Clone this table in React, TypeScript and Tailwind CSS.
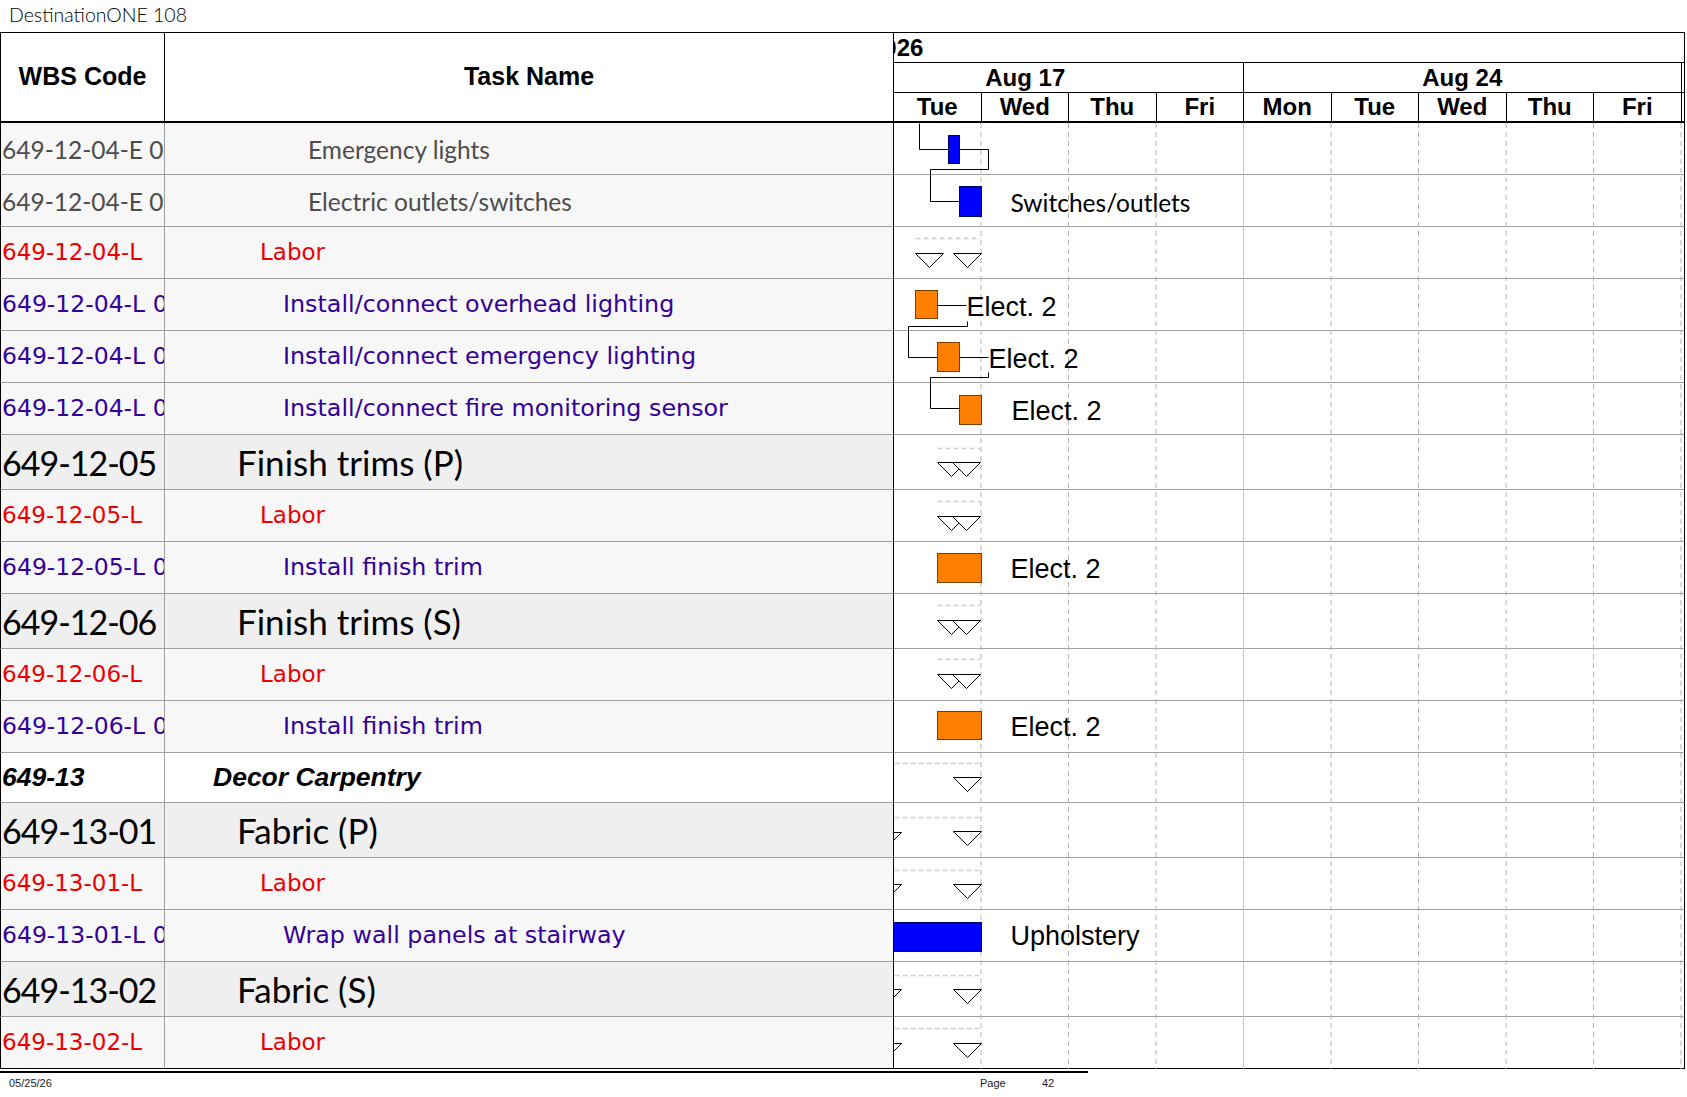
import React from "react";

type Kind = "gray" | "red" | "purple" | "big" | "decor";

type Row = { wbs: string; task: string; kind: Kind };

const rows: Row[] = [
  { wbs: "649-12-04-E 010", task: "Emergency lights", kind: "gray" },
  { wbs: "649-12-04-E 020", task: "Electric outlets/switches", kind: "gray" },
  { wbs: "649-12-04-L", task: "Labor", kind: "red" },
  { wbs: "649-12-04-L 010", task: "Install/connect overhead lighting", kind: "purple" },
  { wbs: "649-12-04-L 020", task: "Install/connect emergency lighting", kind: "purple" },
  { wbs: "649-12-04-L 030", task: "Install/connect fire monitoring sensor", kind: "purple" },
  { wbs: "649-12-05", task: "Finish trims (P)", kind: "big" },
  { wbs: "649-12-05-L", task: "Labor", kind: "red" },
  { wbs: "649-12-05-L 010", task: "Install finish trim", kind: "purple" },
  { wbs: "649-12-06", task: "Finish trims (S)", kind: "big" },
  { wbs: "649-12-06-L", task: "Labor", kind: "red" },
  { wbs: "649-12-06-L 010", task: "Install finish trim", kind: "purple" },
  { wbs: "649-13", task: "Decor Carpentry", kind: "decor" },
  { wbs: "649-13-01", task: "Fabric (P)", kind: "big" },
  { wbs: "649-13-01-L", task: "Labor", kind: "red" },
  { wbs: "649-13-01-L 010", task: "Wrap wall panels at stairway", kind: "purple" },
  { wbs: "649-13-02", task: "Fabric (S)", kind: "big" },
  { wbs: "649-13-02-L", task: "Labor", kind: "red" },
];

const rowHeight: Record<Kind, string> = {
  gray: "h-[52px]",
  red: "h-[52px]",
  purple: "h-[52px]",
  big: "h-[55px]",
  decor: "h-[50px]",
};

const rowBg: Record<Kind, string> = {
  gray: "bg-[#f7f7f7]",
  red: "bg-[#f7f7f7]",
  purple: "bg-[#f7f7f7]",
  big: "bg-[#efefef]",
  decor: "bg-white",
};

const wbsText: Record<Kind, string> = {
  gray: "font-['Lato',sans-serif] text-[24.5px] text-[#4d4d4d] pt-[3px]",
  red: "font-['DejaVu_Sans',sans-serif] text-[23px] text-[#ee0000]",
  purple: "font-['DejaVu_Sans',sans-serif] text-[23.5px] text-[#330099]",
  big: "font-['Lato',sans-serif] text-[34px] tracking-[-1px] text-black",
  decor: "font-['Liberation_Sans',sans-serif] text-[26.5px] font-bold italic text-black",
};

const taskText: Record<Kind, string> = {
  gray: "font-['Lato',sans-serif] text-[24.5px] text-[#4d4d4d] pl-[143px] pt-[3px]",
  red: "font-['DejaVu_Sans',sans-serif] text-[23px] text-[#ee0000] pl-[95px]",
  purple: "font-['DejaVu_Sans',sans-serif] text-[23.8px] text-[#330099] pl-[118px]",
  big: "font-['Lato',sans-serif] text-[35px] text-black pl-[72px]",
  decor: "font-['Liberation_Sans',sans-serif] text-[26.5px] font-bold italic text-black pl-[48px]",
};

const days = ["Tue", "Wed", "Thu", "Fri", "Mon", "Tue", "Wed", "Thu", "Fri"];

const BLUE = "#0000ff";
const ORANGE = "#ff8000";

function Tri({ x, y }: { x: number; y: number }) {
  return (
    <polygon
      points={`${x},${y} ${x + 28},${y} ${x + 14},${y + 14}`}
      fill="white"
      stroke="black"
      strokeWidth={1}
    />
  );
}

function Dash({ x1, x2, y }: { x1: number; x2: number; y: number }) {
  return (
    <line x1={x1} x2={x2} y1={y} y2={y} stroke="#cfcfcf" strokeWidth={1.5} strokeDasharray="5 3" />
  );
}

function Bar({ x, y, w, h, color }: { x: number; y: number; w: number; h: number; color: string }) {
  return (
    <rect
      x={x}
      y={y}
      width={w}
      height={h}
      fill={color}
      stroke={color === BLUE ? "#000066" : "#7a3d00"}
      strokeWidth={1}
    />
  );
}

function Label({ x, y, children, calibri }: { x: number; y: number; children: string; calibri?: boolean }) {
  return (
    <text
      x={x}
      y={y}
      fontFamily={calibri ? "Lato, sans-serif" : "Liberation Sans, Arial, sans-serif"}
      fontSize={calibri ? 24.5 : 27}
      fill="#000"
    >
      {children}
    </text>
  );
}

function ChartBody() {
  return (
    <svg
      className="absolute left-[894px] top-0 pointer-events-none"
      width={790}
      height={946}
      viewBox="0 0 790 946"
    >
      {days.map((_, i) => {
        const x = 87.5 * (i + 1) - 0.5;
        return i === 3 ? (
          <line key={i} x1={x} x2={x} y1={0} y2={946} stroke="#c4c4c4" strokeWidth={1} />
        ) : (
          <line key={i} x1={x} x2={x} y1={0} y2={946} stroke="#b4b4b4" strokeWidth={1} strokeDasharray="5 4" />
        );
      })}
      <g transform="translate(0.5,0.5)">
        {/* emergency lights / outlets */}
        <polyline points="25,0 25,26 94,26 94,46 36,46 36,78 65,78" fill="none" stroke="black" />
        <Bar x={54} y={12} w={11} h={28} color={BLUE} />
        <Bar x={65} y={63} w={22} h={30} color={BLUE} />
        <Label x={116} y={88} calibri>
          Switches/outlets
        </Label>

        {/* 649-12-04-L */}
        <Dash x1={21} x2={86} y={115} />
        <Tri x={21} y={130} />
        <Tri x={59} y={130} />

        <Bar x={21} y={167} w={22} h={28} color={ORANGE} />
        <line x1={43} x2={72} y1={182} y2={182} stroke="black" />
        <Label x={72} y={192}>Elect. 2</Label>
        <polyline points="73,198 73,203 14,203 14,234 43,234" fill="none" stroke="black" />

        <Bar x={43} y={219} w={22} h={29} color={ORANGE} />
        <line x1={65} x2={94} y1={234} y2={234} stroke="black" />
        <Label x={94} y={244}>Elect. 2</Label>
        <polyline points="94,249 94,254 36,254 36,285 65,285" fill="none" stroke="black" />

        <Bar x={65} y={272} w={22} h={29} color={ORANGE} />
        <Label x={117} y={296}>Elect. 2</Label>

        {/* 649-12-05 */}
        <Dash x1={43} x2={86} y={325} />
        <Tri x={43} y={339} />
        <Tri x={58} y={339} />
        <Dash x1={43} x2={86} y={378} />
        <Tri x={43} y={393} />
        <Tri x={58} y={393} />
        <Bar x={43} y={430} w={44} h={29} color={ORANGE} />
        <Label x={116} y={454}>Elect. 2</Label>

        {/* 649-12-06 */}
        <Dash x1={43} x2={86} y={482} />
        <Tri x={43} y={497} />
        <Tri x={58} y={497} />
        <Dash x1={43} x2={86} y={536} />
        <Tri x={43} y={551} />
        <Tri x={58} y={551} />
        <Bar x={43} y={588} w={44} h={28} color={ORANGE} />
        <Label x={116} y={612}>Elect. 2</Label>

        {/* 649-13 */}
        <Dash x1={0} x2={86} y={640} />
        <Tri x={59} y={654} />
        <Dash x1={0} x2={86} y={694} />
        <Tri x={-21} y={709} />
        <Tri x={59} y={708} />
        <Dash x1={0} x2={86} y={747} />
        <Tri x={-21} y={761} />
        <Tri x={59} y={761} />
        <Bar x={-2} y={799} w={89} h={29} color={BLUE} />
        <Label x={116} y={821}>Upholstery</Label>
        <Dash x1={0} x2={86} y={852} />
        <Tri x={-21} y={866} />
        <Tri x={59} y={866} />
        <Dash x1={0} x2={86} y={905} />
        <Tri x={-21} y={920} />
        <Tri x={59} y={920} />
      </g>
    </svg>
  );
}

function ChartHeader() {
  return (
    <div className="w-[791px] border-r border-black flex flex-col font-bold text-[24px] text-black">
      <div className="h-[30px] border-b border-black overflow-hidden">
        <div className="ml-[-24px] leading-[29px]">2026</div>
      </div>
      <div className="h-[30px] border-b border-black grid grid-cols-[350px_437.5px_1fr]">
        <div className="border-r border-black overflow-hidden">
          <div className="ml-[-87.5px] w-[437.5px] text-center leading-[29px]">Aug 17</div>
        </div>
        <div className="border-r border-black text-center leading-[29px]">Aug 24</div>
        <div />
      </div>
      <div className="h-[30px] border-b-2 border-black grid grid-cols-[repeat(9,87.5px)_1fr]">
        {days.map((d, i) => (
          <div key={i} className="border-r border-black text-center leading-[28px]">
            {d}
          </div>
        ))}
        <div />
      </div>
    </div>
  );
}

export default function App() {
  return (
    <div className="w-[1687px] h-[1097px] bg-white overflow-hidden font-['Liberation_Sans',Arial,sans-serif] text-black">
      <div className="h-[32px] pl-[9px] pt-[3px] font-['Lato',sans-serif] font-light text-[19.5px] leading-[24px] text-black">
        DestinationONE 108
      </div>

      <div className="flex w-[1685px] border-t border-black">
        <div className="w-[165px] h-[90px] border-l border-r border-b-2 border-black flex items-center justify-center font-bold text-[25px]">
          WBS Code
        </div>
        <div className="w-[729px] h-[90px] border-r border-b-2 border-black flex items-center justify-center font-bold text-[25px]">
          Task Name
        </div>
        <ChartHeader />
      </div>

      <div className="relative w-[1685px]">
        {rows.map((r, i) => {
          const last = i === rows.length - 1;
          const bottom = last ? "border-b-black" : "border-b-[#a0a0a0]";
          return (
            <div key={i} className={`flex ${rowHeight[r.kind]}`}>
              <div
                className={`w-[165px] border-l border-l-black border-r border-r-[#a0a0a0] border-b ${bottom} ${rowBg[r.kind]} overflow-hidden whitespace-nowrap flex items-center pl-[1px] ${wbsText[r.kind]}`}
              >
                {r.wbs}
              </div>
              <div
                className={`w-[729px] border-r border-r-black border-b ${bottom} ${rowBg[r.kind]} overflow-hidden whitespace-nowrap flex items-center ${taskText[r.kind]}`}
              >
                {r.task}
              </div>
              <div className={`w-[791px] border-r border-r-black border-b ${bottom} bg-white`} />
            </div>
          );
        })}
        <ChartBody />
      </div>

      <div className="mt-[2px] w-[1088px] h-[1.5px] bg-black" />
      <div className="flex items-center h-[22px] text-[11px] text-[#222]">
        <span className="ml-[9px] w-[971px]">05/25/26</span>
        <span className="w-[62px]">Page</span>
        <span>42</span>
      </div>
    </div>
  );
}
